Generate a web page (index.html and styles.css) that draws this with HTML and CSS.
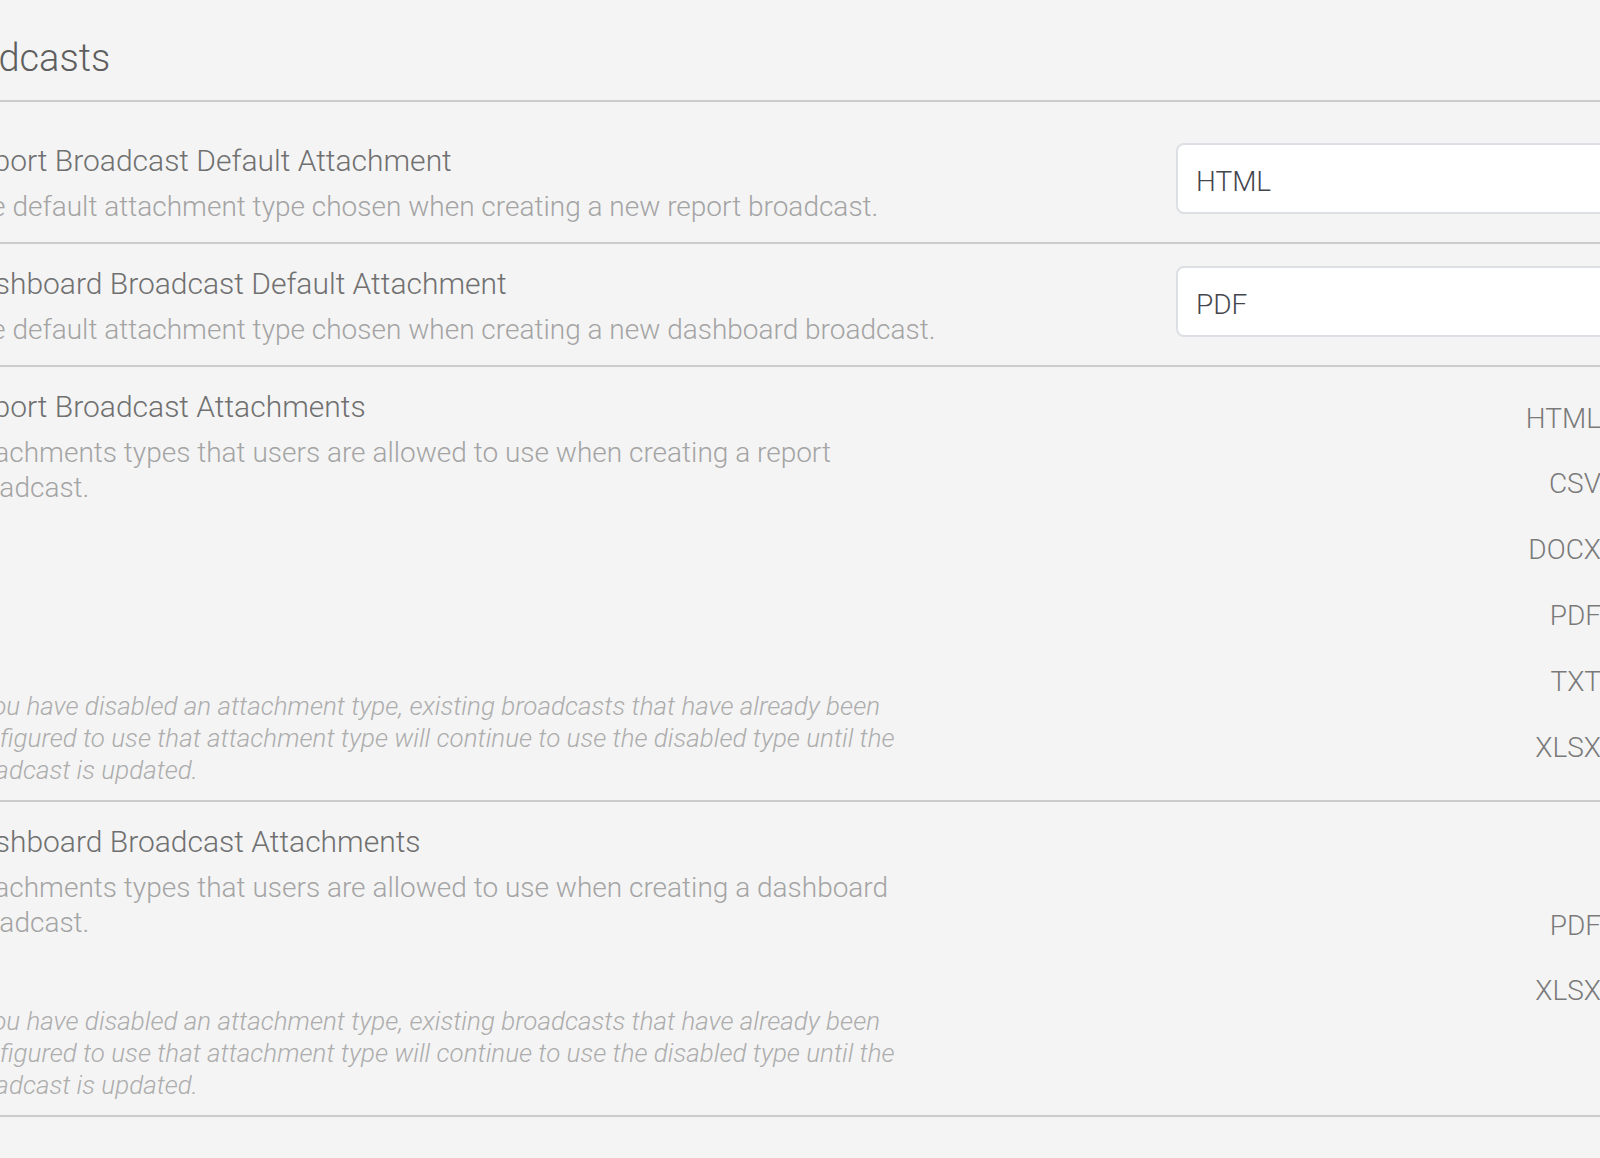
FILE: index.html
```html
<!DOCTYPE html>
<html lang="en">
<head>
<meta charset="utf-8">
<title>Broadcasts</title>
<link rel="stylesheet" href="styles.css">
</head>
<body>
<div class="page">
  <div class="header">
    <h1 class="heading">Broadcasts</h1>
  </div>
  <div class="rows">
    <div class="row">
      <div class="info">
        <div class="title">Report Broadcast Default Attachment</div>
        <div class="desc">The default attachment type chosen when creating a new report broadcast.</div>
      </div>
      <div class="control">
        <div class="select">HTML</div>
      </div>
    </div>
    <div class="row">
      <div class="info">
        <div class="title">Dashboard Broadcast Default Attachment</div>
        <div class="desc">The default attachment type chosen when creating a new dashboard broadcast.</div>
      </div>
      <div class="control">
        <div class="select">PDF</div>
      </div>
    </div>
    <div class="row">
      <div class="info">
        <div class="title">Report Broadcast Attachments</div>
        <div class="desc">Attachments types that users are allowed to use when creating a report broadcast.</div>
        <div class="note">If you have disabled an attachment type, existing broadcasts that have already been configured to use that attachment type will continue to use the disabled type until the broadcast is updated.</div>
      </div>
      <div class="control">
        <ul class="checks">
          <li class="check">HTML</li>
          <li class="check">CSV</li>
          <li class="check">DOCX</li>
          <li class="check">PDF</li>
          <li class="check">TXT</li>
          <li class="check">XLSX</li>
        </ul>
      </div>
    </div>
    <div class="row">
      <div class="info">
        <div class="title">Dashboard Broadcast Attachments</div>
        <div class="desc">Attachments types that users are allowed to use when creating a dashboard broadcast.</div>
        <div class="note">If you have disabled an attachment type, existing broadcasts that have already been configured to use that attachment type will continue to use the disabled type until the broadcast is updated.</div>
      </div>
      <div class="control control-center">
        <ul class="checks">
          <li class="check">PDF</li>
          <li class="check">XLSX</li>
        </ul>
      </div>
    </div>
  </div>
</div>
</body>
</html>
```
FILE: styles.css
```css
html, body {
  margin: 0;
  padding: 0;
  background: #f4f4f4;
}
body {
  width: 1600px;
  height: 1158px;
  overflow: hidden;
  font-family: "Roboto Light", Roboto, "Liberation Sans", sans-serif;
  font-weight: 300;
}
.page {
  margin-left: -81px;
  width: 1721px;
}
.header {
  padding: 36px 0 18px 2px;
  border-bottom: 2px solid #cccccc;
}
.heading {
  margin: 0;
  font-size: 38px;
  line-height: 1.2;
  font-weight: 300;
  color: #5e5e5e;
}
.rows {
  padding-top: 19px;
}
.row {
  display: flex;
  align-items: stretch;
  padding: 22px 0 14px 40px;
  border-bottom: 2px solid #cccccc;
}
.info {
  width: 994px;
  flex: none;
  display: flex;
  flex-direction: column;
}
.title {
  font-size: 30px;
  line-height: 36px;
  color: #707070;
  margin-bottom: 10px;
}
.desc {
  font-size: 28px;
  line-height: 35px;
  color: #a4a4a4;
  margin-bottom: 4px;
}
.note {
  margin-top: auto;
  padding-top: 61px;
  font-size: 26px;
  line-height: 32px;
  font-style: italic;
  color: #adadad;
}
.control {
  margin-left: auto;
  width: 464px;
  flex: none;
  align-self: flex-start;
}
.control-center {
  align-self: center;
}
.select {
  box-sizing: border-box;
  height: 71px;
  border: 2px solid #dcdfe4;
  border-radius: 8px;
  background: #ffffff;
  padding: 6px 18px 0;
  font-size: 28px;
  line-height: 61px;
  color: #43464d;
}
.checks {
  list-style: none;
  margin: 0;
  padding: 0 39px 3px 0;
  text-align: right;
}
.check {
  padding: 12px 0 18.8px;
  font-size: 28px;
  line-height: 35px;
  color: #7a7a7a;
}
```
